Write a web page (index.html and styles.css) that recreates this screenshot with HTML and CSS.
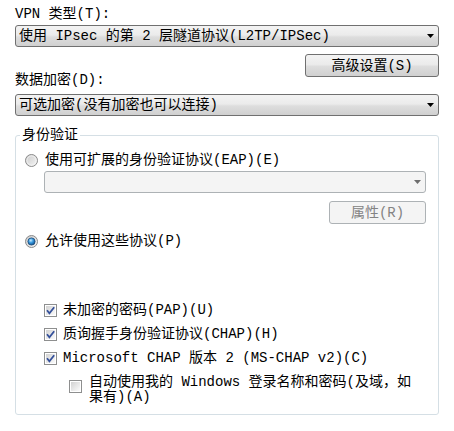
FILE: index.html
```html
<!DOCTYPE html>
<html lang="zh-CN">
<head>
<meta charset="utf-8">
<link rel="stylesheet" href="styles.css">
</head>
<body>
<div class="dlg">
  <div class="label">VPN 类型(T):</div>
  <div class="combo top-combo">
    <span class="val">使用 IPsec 的第 2 层隧道协议(L2TP/IPSec)</span>
    <svg class="arrow" width="7" height="4" viewBox="0 0 7 4"><polygon points="0,0 7,0 3.5,4" fill="#000"/></svg>
  </div>
  <div class="adv-row">
    <div class="label enc-label">数据加密(D):</div>
    <div class="btn adv">高级设置(S)</div>
  </div>
  <div class="combo enc-combo">
    <span class="val">可选加密(没有加密也可以连接)</span>
    <svg class="arrow" width="7" height="4" viewBox="0 0 7 4"><polygon points="0,0 7,0 3.5,4" fill="#000"/></svg>
  </div>

  <fieldset class="group">
    <legend class="legend">身份验证</legend>
    <div class="group-body">
      <div class="radio-row r1">
        <svg class="radio" width="13" height="13" viewBox="0 0 13 13">
          <defs>
            <linearGradient id="rgA" x1="0" y1="0" x2="1" y2="1">
              <stop offset="0" stop-color="#c9c9c9"/>
              <stop offset="1" stop-color="#f7f7f7"/>
            </linearGradient>
          </defs>
          <circle cx="6.5" cy="6.5" r="6" fill="url(#rgA)" stroke="#8a8a8a"/>
          <circle cx="6.5" cy="6.5" r="4.6" fill="none" stroke="#f4f4f4" stroke-width="0.8"/>
        </svg>
        <span>使用可扩展的身份验证协议(EAP)(E)</span>
      </div>
      <div class="combo disabled eap-combo">
        <span class="val"></span>
        <svg class="arrow" width="7" height="4" viewBox="0 0 7 4"><polygon points="0,0 7,0 3.5,4" fill="#6d6d6d"/></svg>
      </div>
      <div class="props-row">
        <div class="btn disabled props">属性(R)</div>
      </div>
      <div class="radio-row r2">
        <svg class="radio" width="13" height="13" viewBox="0 0 13 13">
          <defs>
            <linearGradient id="rgB" x1="0" y1="0" x2="1" y2="1">
              <stop offset="0" stop-color="#c9c9c9"/>
              <stop offset="1" stop-color="#f7f7f7"/>
            </linearGradient>
            <radialGradient id="dot" cx="0.4" cy="0.35" r="0.7">
              <stop offset="0" stop-color="#c8ecff"/>
              <stop offset="0.45" stop-color="#3a9be0"/>
              <stop offset="1" stop-color="#0b4a86"/>
            </radialGradient>
          </defs>
          <circle cx="6.5" cy="6.5" r="6" fill="url(#rgB)" stroke="#8a8a8a"/>
          <circle cx="6.5" cy="6.5" r="3.6" fill="url(#dot)" stroke="#1c4a78" stroke-width="0.8"/>
        </svg>
        <span>允许使用这些协议(P)</span>
      </div>

      <div class="checks">
        <div class="check-row">
          <svg class="cb" width="13" height="13" viewBox="0 0 13 13">
            <defs>
              <linearGradient id="cbg" x1="0" y1="0" x2="1" y2="1">
                <stop offset="0" stop-color="#d2d2d2"/>
                <stop offset="1" stop-color="#fbfbfb"/>
              </linearGradient>
            </defs>
            <rect x="0.5" y="0.5" width="12" height="12" fill="#fff" stroke="#8e8f8f"/>
            <rect x="2" y="2" width="9" height="9" fill="url(#cbg)"/>
            <path d="M3 6.3 L5.4 9.2 L10.2 3.2" fill="none" stroke="#34509a" stroke-width="1.8"/>
          </svg>
          <span>未加密的密码(PAP)(U)</span>
        </div>
        <div class="check-row">
          <svg class="cb" width="13" height="13" viewBox="0 0 13 13">
            <rect x="0.5" y="0.5" width="12" height="12" fill="#fff" stroke="#8e8f8f"/>
            <rect x="2" y="2" width="9" height="9" fill="url(#cbg)"/>
            <path d="M3 6.3 L5.4 9.2 L10.2 3.2" fill="none" stroke="#34509a" stroke-width="1.8"/>
          </svg>
          <span>质询握手身份验证协议(CHAP)(H)</span>
        </div>
        <div class="check-row">
          <svg class="cb" width="13" height="13" viewBox="0 0 13 13">
            <rect x="0.5" y="0.5" width="12" height="12" fill="#fff" stroke="#8e8f8f"/>
            <rect x="2" y="2" width="9" height="9" fill="url(#cbg)"/>
            <path d="M3 6.3 L5.4 9.2 L10.2 3.2" fill="none" stroke="#34509a" stroke-width="1.8"/>
          </svg>
          <span>Microsoft CHAP 版本 2 (MS-CHAP v2)(C)</span>
        </div>
        <div class="sub-row">
          <svg class="cb" width="13" height="13" viewBox="0 0 13 13">
            <rect x="0.5" y="0.5" width="12" height="12" fill="#fff" stroke="#8e8f8f"/>
            <rect x="2" y="2" width="9" height="9" fill="url(#cbg)"/>
          </svg>
          <span class="sub-text">自动使用我的 Windows 登录名称和密码(及域，如果有)(A)</span>
        </div>
      </div>
    </div>
  </fieldset>
</div>
</body>
</html>
```

FILE: styles.css
```css
* {
  box-sizing: border-box;
}

html,
body {
  margin: 0;
  padding: 0;
  background: #ffffff;
}

body {
  font-family: "Liberation Mono", "Noto Sans CJK SC", monospace;
  font-size: 14px;
  line-height: 16px;
  color: #000000;
}

.dlg {
  width: 454px;
  padding: 6px 15px 0 15px;
}

.label {
  height: 16px;
  line-height: 16px;
  white-space: nowrap;
}

.combo {
  display: flex;
  align-items: center;
  justify-content: space-between;
  height: 22px;
  padding: 0 4px 0 3px;
  border: 1px solid #707070;
  border-radius: 3px;
  background: linear-gradient(#f3f3f3 0%, #ebebeb 45%, #dddddd 55%, #d0d0d0 100%);
  white-space: nowrap;
}

.combo .val {
  line-height: 16px;
}

.combo .arrow {
  display: block;
  flex: none;
}

.top-combo {
  margin-top: 3px;
}

.adv-row {
  display: flex;
  justify-content: space-between;
  align-items: flex-start;
  margin-top: 7px;
}

.enc-label {
  margin-top: 18px;
}

.btn {
  display: flex;
  align-items: center;
  justify-content: center;
  height: 23px;
  border: 1px solid #707070;
  border-radius: 3px;
  background: linear-gradient(#f3f3f3 0%, #ebebeb 45%, #dddddd 55%, #d0d0d0 100%);
  white-space: nowrap;
}

.adv {
  width: 134px;
}

.enc-combo {
  margin-top: 6px;
}

.group {
  margin: 11px 0 0 0;
  padding: 0 0 9px 0;
  min-width: 0;
  border: 1px solid #d5dfe5;
  border-radius: 3px;
}

.legend {
  margin-left: 4px;
  padding: 0 2px;
  line-height: 16px;
}

.group-body {
  padding: 0 12px 0 9px;
}

.radio-row {
  display: flex;
  align-items: center;
  height: 16px;
  white-space: nowrap;
}

.radio-row .radio {
  flex: none;
  margin-right: 7px;
}

.r1 {
  margin-top: 9px;
}

.combo.disabled {
  border-color: #adb2b5;
  background: #f4f4f4;
}

.eap-combo {
  margin: 3px 0 0 19px;
}

.props-row {
  display: flex;
  justify-content: flex-end;
  margin-top: 8px;
}

.btn.disabled {
  border-color: #adb2b5;
  background: #f4f4f4;
  color: #838383;
}

.props {
  width: 97px;
}

.r2 {
  margin-top: 9px;
}

.checks {
  margin: 49px 0 0 19px;
}

.check-row {
  display: flex;
  align-items: center;
  height: 24px;
  white-space: nowrap;
}

.cb {
  flex: none;
  display: block;
}

.check-row .cb {
  margin-right: 6px;
}

.sub-row {
  display: flex;
  align-items: flex-start;
  margin: 5px 0 0 25px;
}

.sub-row .cb {
  margin: 5px 7px 0 0;
}

.sub-text {
  width: 330px;
  line-height: 15px;
}
```
